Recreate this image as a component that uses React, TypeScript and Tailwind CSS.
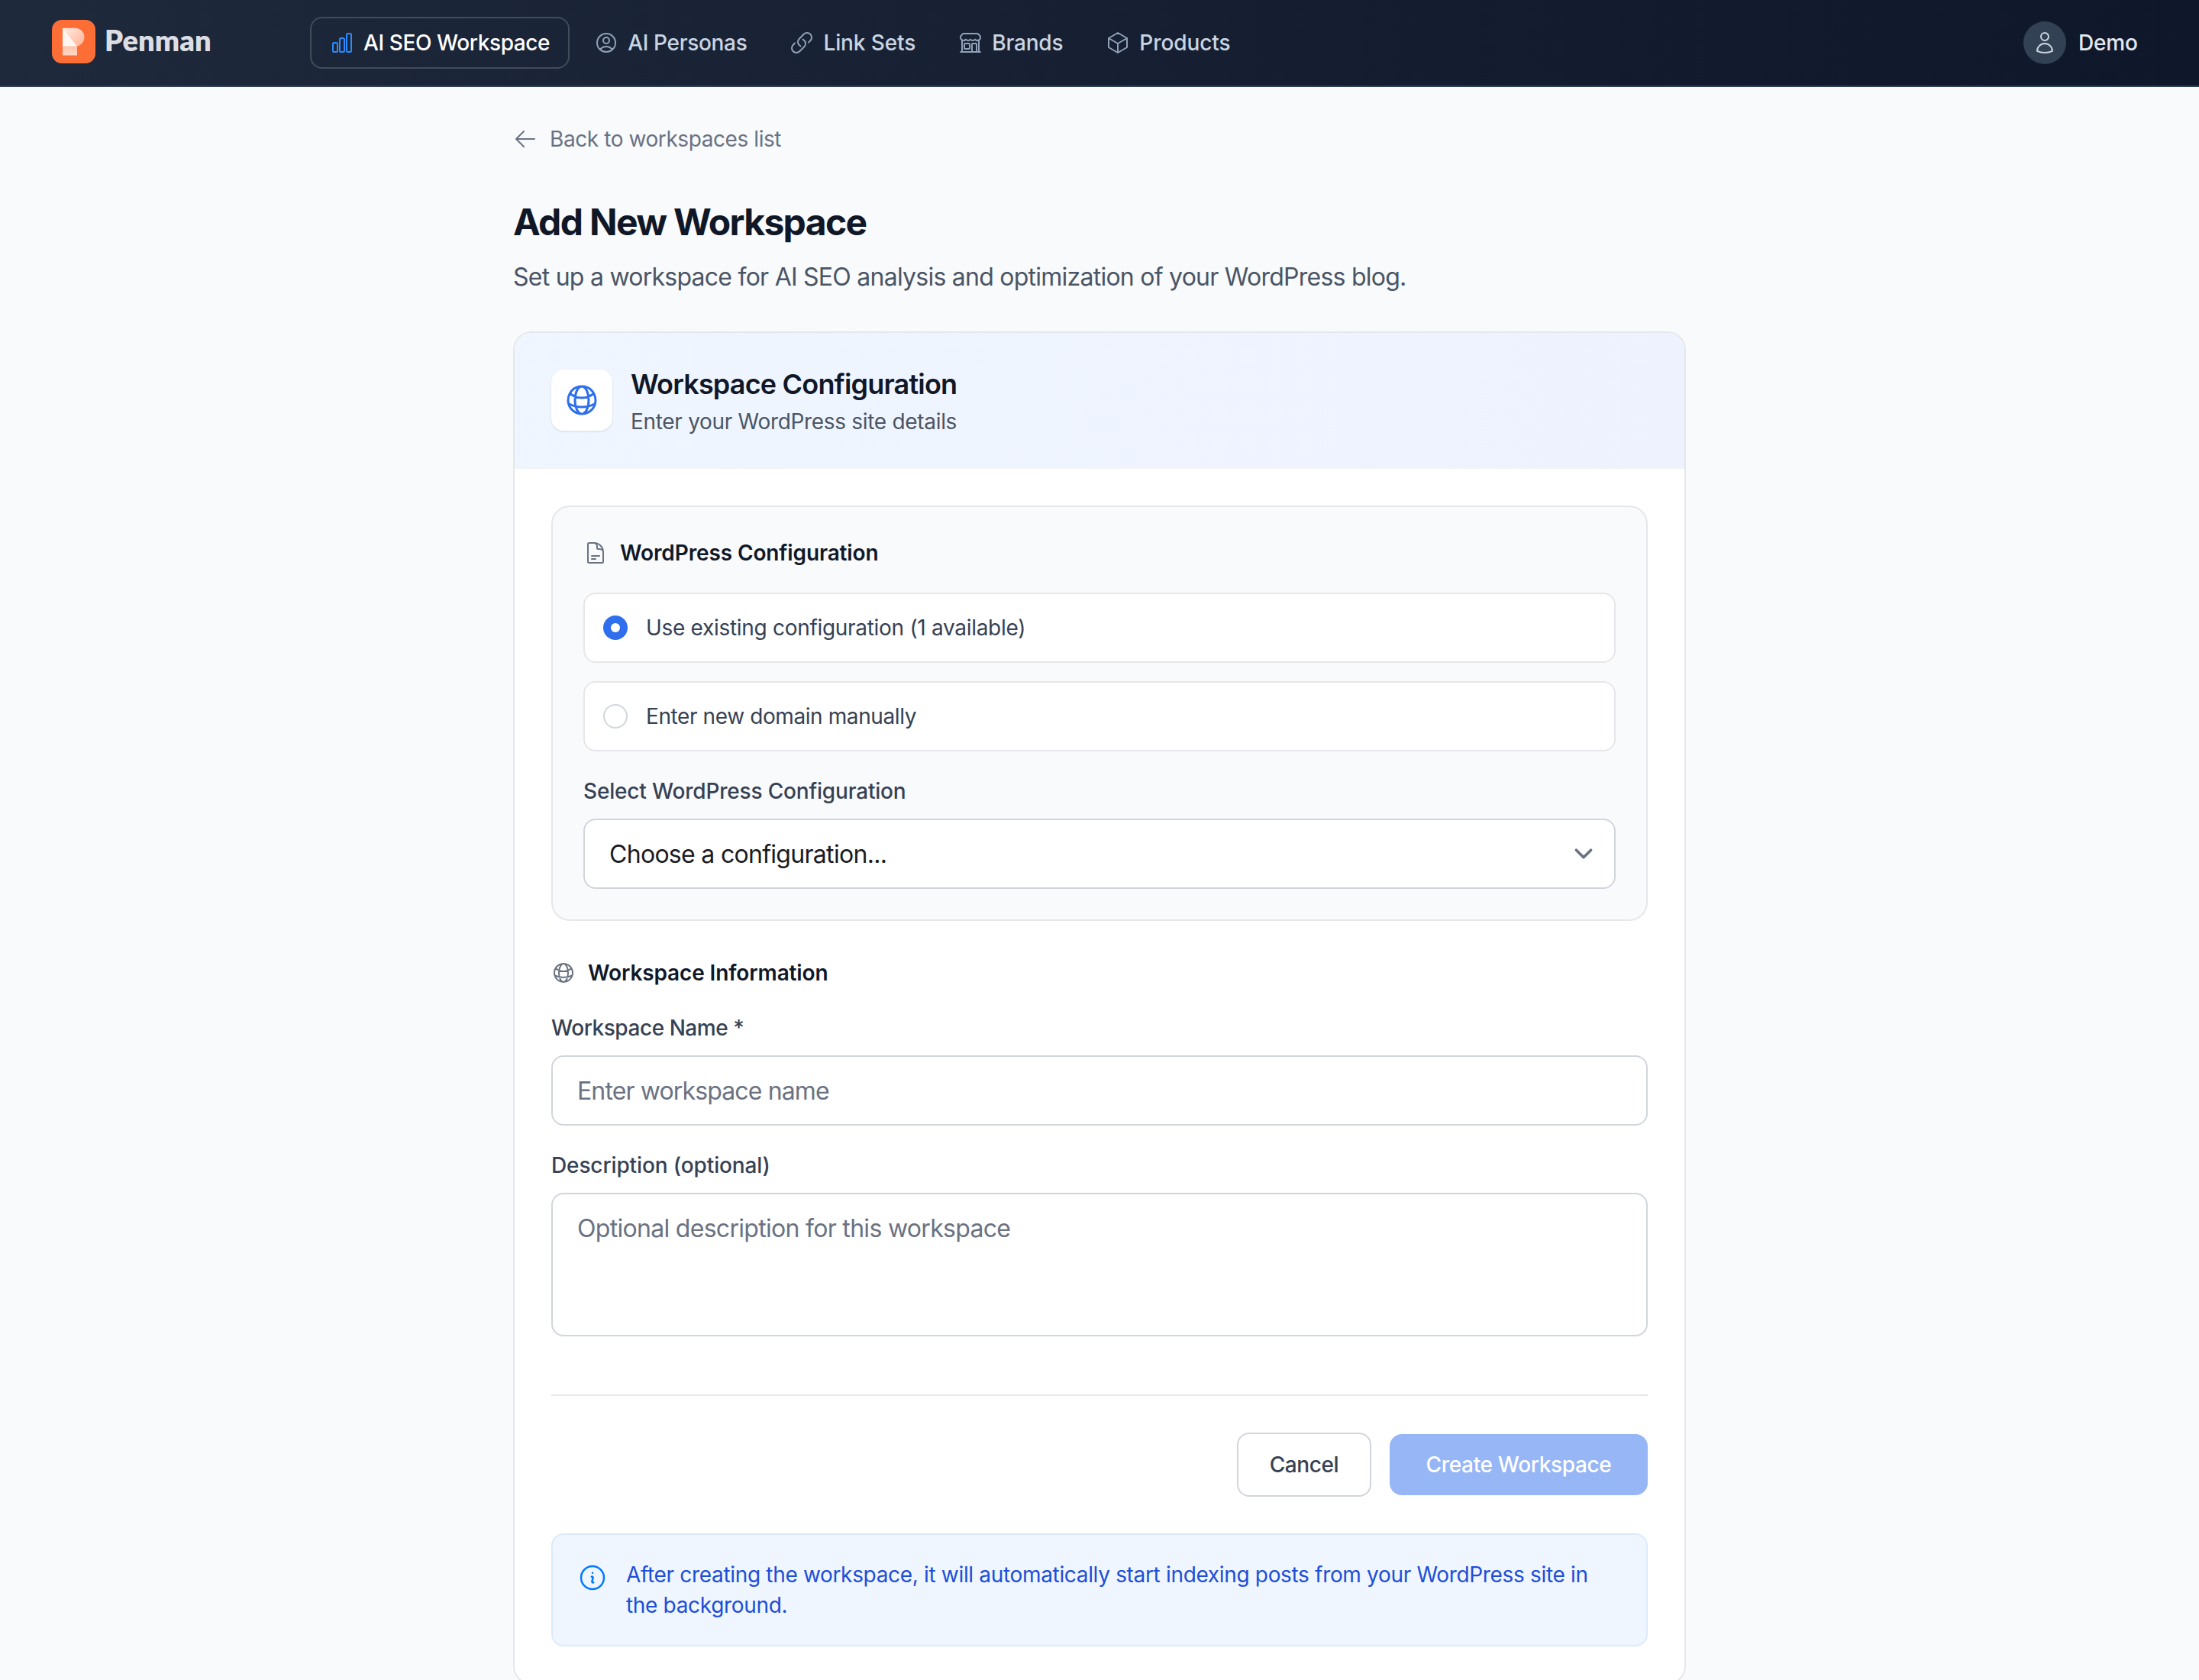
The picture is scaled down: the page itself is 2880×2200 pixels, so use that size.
import { FC, ReactNode } from "react";
import {
  HiOutlineArrowLeft,
  HiOutlineBuildingStorefront,
  HiOutlineChartBar,
  HiOutlineCube,
  HiOutlineDocumentText,
  HiOutlineGlobeAlt,
  HiOutlineInformationCircle,
  HiOutlineLink,
  HiOutlineUser,
  HiOutlineUserCircle,
} from "react-icons/hi2";

interface INavItemProps {
  icon: ReactNode;
  label: string;
  tracking: string;
  active?: boolean;
}

const navItems: INavItemProps[] = [
  {
    icon: <HiOutlineChartBar className="size-8 text-[#2b8cff]" />,
    label: "AI SEO Workspace",
    tracking: "tracking-[-0.4px]",
    active: true,
  },
  {
    icon: <HiOutlineUserCircle className="size-8" />,
    label: "AI Personas",
    tracking: "tracking-[-0.32px]",
  },
  {
    icon: <HiOutlineLink className="size-8" />,
    label: "Link Sets",
    tracking: "tracking-[-0.1px]",
  },
  {
    icon: <HiOutlineBuildingStorefront className="size-8" />,
    label: "Brands",
    tracking: "tracking-[-0.2px]",
  },
  {
    icon: <HiOutlineCube className="size-8" />,
    label: "Products",
    tracking: "tracking-[-0.08px]",
  },
];

const Logo: FC = () => (
  <div className="mb-[3px] flex w-[338px] items-center gap-3">
    <svg className="size-[57px]" viewBox="0 0 57 57" fill="none">
      <defs>
        <linearGradient id="bowl" x1="18" y1="10" x2="40" y2="34" gradientUnits="userSpaceOnUse">
          <stop stopColor="#ffe9e0" />
          <stop offset="1" stopColor="#ffb596" />
        </linearGradient>
        <linearGradient id="stem" x1="14" y1="35" x2="14" y2="47" gradientUnits="userSpaceOnUse">
          <stop stopColor="#ffc4ab" />
          <stop offset="1" stopColor="#ffd9ca" />
        </linearGradient>
      </defs>
      <rect width="57" height="57" rx="13" fill="#fd6d36" />
      <path d="M14 10.700h16.500a12 12 0 0 1 0 24H14z" fill="url(#bowl)" />
      <path d="M14 10.700 33 34.700H14z" fill="#fff6f1" />
      <path d="M14 34.700h19V46.500H14z" fill="url(#stem)" />
    </svg>
    <span className="mb-1.5 font-['Lato'] text-[38px] leading-none font-extrabold tracking-[0.1px] text-[#dcdee3]">
      Penman
    </span>
  </div>
);

const NavItem: FC<INavItemProps> = ({ icon, label, tracking, active }) => (
  <a
    className={`flex h-[68px] items-center gap-3 rounded-2xl px-6 text-[28px] font-medium ${
      active ? "border-2 border-[#414c5a] text-white" : "text-slate-400"
    }`}
  >
    {icon}
    <span className={`${tracking} ${active ? "text-white" : "text-slate-300"}`}>
      {label}
    </span>
  </a>
);

const Header: FC = () => (
  <header className="flex h-[114px] items-center border-b-2 border-slate-700 bg-linear-to-r from-[#1e293b] to-[#0f172a] pr-20 pl-[68px]">
    <Logo />
    <nav className="flex items-center gap-2">
      {navItems.map((item) => (
        <NavItem key={item.label} {...item} />
      ))}
    </nav>
    <div className="ml-auto flex items-center gap-4">
      <div className="flex size-14 items-center justify-center rounded-full bg-[#334155] text-slate-300">
        <HiOutlineUser className="size-8" />
      </div>
      <span className="w-[78px] text-[28px] font-medium tracking-[-0.15px] text-slate-200">
        Demo
      </span>
    </div>
  </header>
);

interface IRadioOptionProps {
  label: string;
  tracking: string;
  checked?: boolean;
}

const RadioOption: FC<IRadioOptionProps> = ({ label, tracking, checked }) => (
  <label className="flex items-center gap-6 rounded-2xl border-2 border-gray-200 bg-white p-6">
    <span
      className={`flex size-8 items-center justify-center rounded-full ${
        checked ? "bg-[#2f6fed]" : "border-2 border-gray-300 bg-white"
      }`}
    >
      {checked && <span className="size-3 rounded-full bg-white" />}
    </span>
    <span className={`text-[28px] leading-10 text-gray-700 ${tracking}`}>
      {label}
    </span>
  </label>
);

const SectionTitle: FC<{ icon: ReactNode; title: string }> = ({
  icon,
  title,
}) => (
  <h3 className="flex items-center gap-4 text-[28px] leading-10 font-semibold tracking-[-0.12px] text-gray-900">
    {icon}
    {title}
  </h3>
);

const FieldLabel: FC<{ text: string; tracking: string }> = ({
  text,
  tracking,
}) => (
  <span
    className={`mt-8 mb-4 block text-[28px] leading-10 font-medium text-gray-700 ${tracking}`}
  >
    {text}
  </span>
);

const App: FC = () => {
  return (
    <div className="h-[2200px] overflow-hidden bg-[#f9fafc] font-['Inter',sans-serif]">
      <Header />
      <main className="mx-auto w-[1536px] pt-12">
        <a className="flex items-center gap-4 text-[28px] leading-10 tracking-[-0.42px] text-gray-500">
          <HiOutlineArrowLeft className="size-8" />
          Back to workspaces list
        </a>
        <h1 className="mt-[57px] text-[48px] leading-[64px] font-bold tracking-[-1.66px] text-gray-900">
          Add New Workspace
        </h1>
        <p className="mt-4 text-[32px] leading-12 tracking-[-0.75px] text-gray-600">
          Set up a workspace for AI SEO analysis and optimization of your
          WordPress blog.
        </p>

        <section className="mt-[47px] overflow-hidden rounded-3xl border-2 border-gray-200 bg-white">
          <div className="flex items-center gap-6 border-b-2 border-gray-100 bg-linear-to-r from-blue-50 to-indigo-50 px-12 py-10">
            <div className="flex size-20 items-center justify-center rounded-2xl bg-white shadow-sm">
              <HiOutlineGlobeAlt className="size-12 text-[#2f6fed]" />
            </div>
            <div>
              <h2 className="-mt-px mb-px text-[36px] leading-14 font-semibold tracking-[-0.82px] text-gray-900">
                Workspace Configuration
              </h2>
              <p className="text-[28px] leading-10 tracking-[-0.31px] text-gray-600">
                Enter your WordPress site details
              </p>
            </div>
          </div>

          <div className="p-12">
            <div className="rounded-3xl border-2 border-gray-200 bg-[#f9fafc] p-10">
              <SectionTitle
                icon={<HiOutlineDocumentText className="size-8 text-gray-500" />}
                title="WordPress Configuration"
              />
              <div className="mt-8 flex flex-col gap-6">
                <RadioOption
                  label="Use existing configuration (1 available)"
                  tracking="tracking-[-0.3px]"
                  checked
                />
                <RadioOption
                  label="Enter new domain manually"
                  tracking="tracking-[-0.4px]"
                />
              </div>
              <FieldLabel
                text="Select WordPress Configuration"
                tracking="tracking-[-0.18px]"
              />
              <div className="flex h-[92px] items-center justify-between rounded-2xl border-2 border-gray-300 bg-white pr-4 pl-8 text-[32px] tracking-[-0.7px] text-[#1b1b1f]">
                <span className="pt-0.5">Choose a configuration...</span>
                <svg
                  className="size-12 text-gray-500"
                  viewBox="0 0 20 20"
                  fill="none"
                  stroke="currentColor"
                  strokeWidth="1.5"
                  strokeLinecap="round"
                  strokeLinejoin="round"
                >
                  <path d="m6 8 4 4 4-4" />
                </svg>
              </div>
            </div>

            <div className="mt-12">
              <SectionTitle
                icon={<HiOutlineGlobeAlt className="size-8 text-gray-500" />}
                title="Workspace Information"
              />
              <FieldLabel
                text="Workspace Name *"
                tracking="tracking-[-0.45px]"
              />
              <input
                className="block h-[92px] w-full rounded-2xl border-2 border-gray-300 px-8 pt-px text-[32px] tracking-[-0.87px] placeholder:text-gray-500"
                placeholder="Enter workspace name"
              />
              <FieldLabel
                text="Description (optional)"
                tracking="tracking-[-0.12px]"
              />
              <textarea
                className="block h-[188px] w-full resize-none rounded-2xl border-2 border-gray-300 px-8 pt-[21px] text-[32px] leading-12 tracking-[-0.7px] placeholder:text-gray-500"
                placeholder="Optional description for this workspace"
              />
            </div>

            <div className="mt-[76px] flex items-center justify-end gap-6 border-t-2 border-gray-200 pt-12">
              <button className="w-44 rounded-2xl border-2 border-gray-300 bg-white py-5 text-[28px] leading-10 font-medium tracking-[-0.4px] text-gray-700">
                Cancel
              </button>
              <button className="w-[338px] rounded-2xl bg-[#97b6f6] py-5 text-[28px] leading-10 font-medium tracking-[-0.34px] text-white">
                Create Workspace
              </button>
            </div>

            <div className="mt-12 flex items-start gap-6 rounded-2xl border-2 border-blue-100 bg-blue-50 p-8">
              <HiOutlineInformationCircle className="mt-1 size-10 shrink-0 text-[#007aff]" />
              <p className="text-[28px] leading-10 tracking-[-0.33px] text-[#1d4ed8]">
                After creating the workspace, it will automatically start
                indexing posts from your WordPress site in
                <br />
                the background.
              </p>
            </div>
          </div>
        </section>
      </main>
    </div>
  );
};

export default App;
